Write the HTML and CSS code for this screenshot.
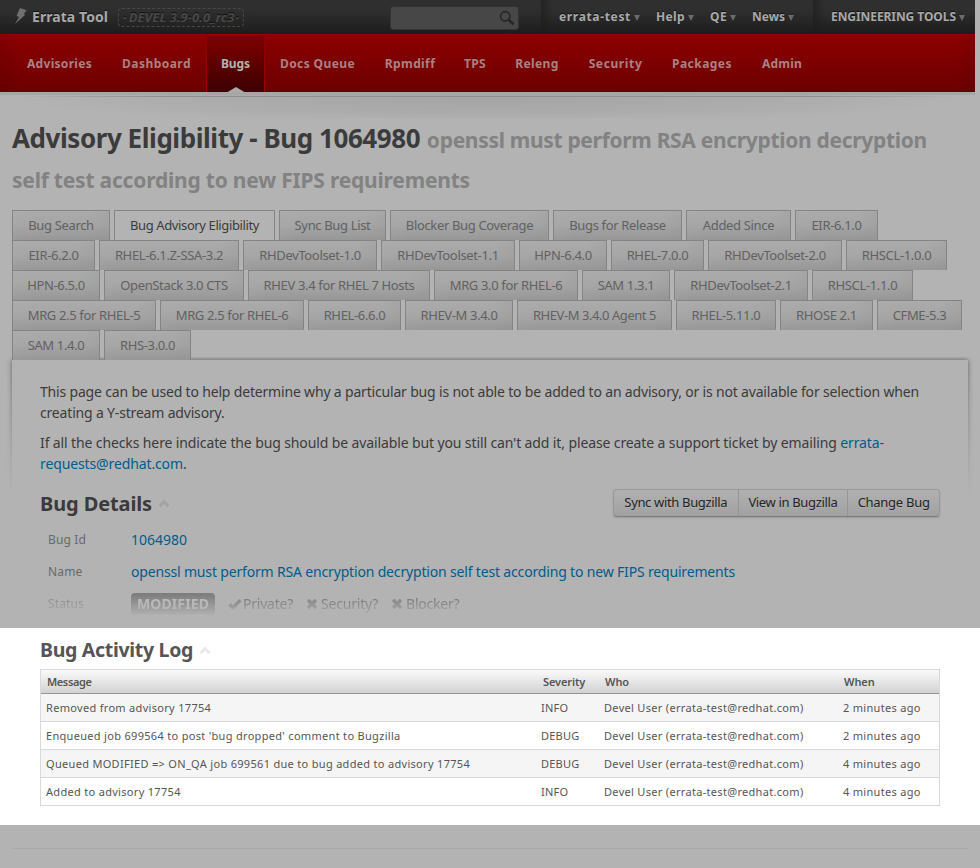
FILE: index.html
```html
<!DOCTYPE html>
<html lang="en">
<head>
<meta charset="utf-8">
<title>Advisory Eligibility - Bug 1064980</title>
<link rel="stylesheet" href="styles.css">
</head>
<body>
<header class="topbar">
  <svg class="bolt" width="12" height="17" viewBox="0 0 12 17"><path d="M5 0 11.6 2.2 8.8 6 10.2 6.7 0 16 4.1 9 1.5 8Z"/></svg>
  <span class="brand">Errata Tool</span>
  <span class="version">DEVEL 3.9-0.0_rc3</span>
  <div class="search"><svg width="16" height="16" viewBox="0 0 16 16"><circle cx="6.3" cy="6.3" r="4.7" fill="none" stroke-width="1.6"/><path d="M9.8 9.8 13.6 13.4" stroke-width="2.8" stroke-linecap="round"/></svg></div>
  <nav class="usermenu">
    <a class="m-user">errata-test<i></i></a><a class="m-help">Help<i></i></a><a class="m-qe">QE<i></i></a><a class="m-news">News<i></i></a>
  </nav>
  <nav class="tools"><a>ENGINEERING TOOLS<i></i></a></nav>
</header>
<nav class="mainnav">
  <a>Advisories</a><a>Dashboard</a><a class="active">Bugs</a><a>Docs Queue</a><a>Rpmdiff</a><a>TPS</a><a>Releng</a><a>Security</a><a>Packages</a><a>Admin</a>
</nav>
<div class="navshadow"></div>
<main>
  <h1><span class="title">Advisory Eligibility - Bug 1064980</span> <small>openssl must perform RSA encryption decryption<br><span class="second">self test according to new FIPS requirements</span></small></h1>
  <div class="tabs">
    <div class="row r1"><a>Bug Search</a><a class="on">Bug Advisory Eligibility</a><a>Sync Bug List</a><a>Blocker Bug Coverage</a><a>Bugs for Release</a><a>Added Since</a><a>EIR-6.1.0</a></div>
    <div class="row r2"><a>EIR-6.2.0</a><a>RHEL-6.1.Z-SSA-3.2</a><a>RHDevToolset-1.0</a><a>RHDevToolset-1.1</a><a>HPN-6.4.0</a><a>RHEL-7.0.0</a><a>RHDevToolset-2.0</a><a>RHSCL-1.0.0</a></div>
    <div class="row r3"><a>HPN-6.5.0</a><a>OpenStack 3.0 CTS</a><a>RHEV 3.4 for RHEL 7 Hosts</a><a>MRG 3.0 for RHEL-6</a><a>SAM 1.3.1</a><a>RHDevToolset-2.1</a><a>RHSCL-1.1.0</a></div>
    <div class="row r4"><a>MRG 2.5 for RHEL-5</a><a>MRG 2.5 for RHEL-6</a><a>RHEL-6.6.0</a><a>RHEV-M 3.4.0</a><a>RHEV-M 3.4.0 Agent 5</a><a>RHEL-5.11.0</a><a>RHOSE 2.1</a><a>CFME-5.3</a></div>
    <div class="row r5"><a>SAM 1.4.0</a><a>RHS-3.0.0</a></div>
  </div>
  <section class="panel">
    <p class="p1">This page can be used to help determine why a particular bug is not able to be added to an advisory, or is not available for selection when<br>creating a Y-stream advisory.</p>
    <p class="p2">If all the checks here indicate the bug should be available but you still can't add it, please create a support ticket by emailing <a>errata-<br>requests@redhat.com</a>.</p>
    <div class="headrow">
      <h2 class="h-details">Bug Details</h2>
      <svg class="chev" width="12" height="9" viewBox="0 0 12 9"><path d="M1.5 7.2 6 2.7 10.5 7.2"/></svg>
      <div class="btns"><a>Sync with Bugzilla</a><a>View in Bugzilla</a><a>Change Bug</a></div>
    </div>
    <dl>
      <dt>Bug Id</dt><dd><a class="num">1064980</a></dd>
      <dt>Name</dt><dd><a>openssl must perform RSA encryption decryption self test according to new FIPS requirements</a></dd>
      <dt class="status">Status</dt>
      <dd class="status flags"><b>MODIFIED</b>
        <span><svg width="14" height="12" viewBox="0 0 14 12"><path d="M1.5 6.5 5 9.8 12.3 2.2" stroke-width="3.2"/></svg>Private?</span>
        <span><svg width="12" height="12" viewBox="0 0 12 12"><path d="M2 2 10 10M10 2 2 10" stroke-width="3.2"/></svg>Security?</span>
        <span><svg width="12" height="12" viewBox="0 0 12 12"><path d="M2 2 10 10M10 2 2 10" stroke-width="3.2"/></svg>Blocker?</span>
      </dd>
    </dl>
  </section>
</main>
<section class="log">
  <div class="headrow">
    <h2 class="h-log">Bug Activity Log</h2>
    <svg class="chev" width="12" height="9" viewBox="0 0 12 9"><path d="M1.5 7.2 6 2.7 10.5 7.2"/></svg>
  </div>
  <table>
    <colgroup><col class="c1"><col class="c2"><col class="c3"><col class="c4"></colgroup>
    <thead><tr><th class="t-msg">Message</th><th>Severity</th><th>Who</th><th>When</th></tr></thead>
    <tbody>
      <tr><td>Removed from advisory 17754</td><td>INFO</td><td>Devel User (errata-test@redhat.com)</td><td>2 minutes ago</td></tr>
      <tr><td>Enqueued job 699564 to post 'bug dropped' comment to Bugzilla</td><td>DEBUG</td><td>Devel User (errata-test@redhat.com)</td><td>2 minutes ago</td></tr>
      <tr><td>Queued MODIFIED =&gt; ON_QA job 699561 due to bug added to advisory 17754</td><td>DEBUG</td><td>Devel User (errata-test@redhat.com)</td><td>4 minutes ago</td></tr>
      <tr><td>Added to advisory 17754</td><td>INFO</td><td>Devel User (errata-test@redhat.com)</td><td>4 minutes ago</td></tr>
    </tbody>
  </table>
</section>
<div class="footline"></div>
</body>
</html>
```
FILE: styles.css
```css
* { box-sizing: border-box; }
body { margin: 0; height: 868px; overflow: hidden; background: #b3b3b3; color: #3b3b3b; font-family: "Noto Sans", "Open Sans", sans-serif; font-size: 14px; white-space: nowrap; }

.topbar { display: flex; width: 975px; height: 34px; padding-left: 15px; background: linear-gradient(#2f2f2f 30%, #1c1c1c); color: #a9a9a9; font-weight: 700; line-height: 34px; text-shadow: 0 -1px 0 #111; }
.bolt { margin: 8px 5px 0 0; fill: #707070; }
.brand { width: 86px; letter-spacing: .06px; }
.version { display: block; width: 126px; height: 19px; margin-top: 8px; border: 1px dashed #484848; border-radius: 4px; color: #484848; font-size: 13px; font-style: italic; line-height: 17px; text-align: center; letter-spacing: .05px; }
.version::before, .version::after { content: "·"; }
.version::before { margin-right: 2px; }
.version::after { margin-left: 1px; }
.search { width: 129px; height: 24px; margin: 6px 0 0 146px; padding: 3px 3px 0 0; border: 1px solid #333; border-radius: 3px; background: #474747; line-height: 0; text-align: right; }
.search svg { stroke: #262626; }
.usermenu { display: flex; width: 272px; height: 34px; margin-left: 22px; padding-left: 18px; background: linear-gradient(90deg, #1b1b1b99, transparent 12px); font-size: 12px; line-height: 33px; }
.tools { padding-left: 18px; height: 34px; background: linear-gradient(90deg, #1b1b1b99, transparent 12px); font-size: 12px; line-height: 33px; letter-spacing: -.07px; }
.topbar i { display: inline-block; margin-left: 3px; border: 3px solid transparent; border-top: 6px solid #6a6a6a; border-bottom: 0; }
.m-user { width: 97px; letter-spacing: .66px; }
.m-help { width: 54px; letter-spacing: .37px; }
.m-qe { width: 42px; letter-spacing: .39px; }

.mainnav { display: flex; width: 975px; height: 58px; padding-left: 12px; background: linear-gradient(90deg, #0001, transparent 20px, transparent 955px, #0001), linear-gradient(#8c0000, #6c0000); border-top: 1px solid #a00000; border-bottom: 1px solid #580000; color: #b08080; font-size: 12px; font-weight: 700; line-height: 57px; letter-spacing: .4px; text-shadow: 0 -1px 0 #5008; }
.mainnav a { width: 95px; flex: none; text-align: center; }
.mainnav a:nth-child(1) { letter-spacing: .3px; }
.mainnav a:nth-child(2) { width: 99px; letter-spacing: .47px; }
.mainnav a:nth-child(3) { width: 59px; letter-spacing: -.05px; }
.mainnav a:nth-child(4) { width: 105px; }
.mainnav a:nth-child(5) { width: 80px; }
.mainnav a:nth-child(6) { width: 50px; }
.mainnav a:nth-child(7) { width: 74px; }
.mainnav a:nth-child(8) { width: 83px; letter-spacing: .62px; }
.mainnav a:nth-child(9) { width: 90px; letter-spacing: .47px; }
.mainnav a:nth-child(10) { width: 70px; letter-spacing: .2px; }
.mainnav .active { position: relative; height: 57px; border: solid; border-width: 0 1px; border-image: linear-gradient(#8c0000, #a00000) 1; background: linear-gradient(#800000, #3c0000); color: #b3b3b3; }
.active::after { content: ""; position: absolute; left: 19px; bottom: -1px; border: 10px solid transparent; border-top: 0; border-bottom: 6px solid #aaa; }

.navshadow { width: 975px; height: 27px; background: radial-gradient(ellipse 480px 24px at 50% 4px, #a5a5a5, #acacac 60%, #b3b3b3); position: relative; border-top: 3px solid #a6a6a6; }
.navshadow::after { content: ""; position: absolute; left: 20px; right: 20px; top: 1px; height: 1px; background: linear-gradient(90deg, transparent, #8f8d8f 15%, #8f8d8f 85%, transparent); }

h1, h2, p, dl, dd { margin: 0; }
main { height: 509px; }
h1 { height: 91px; padding-left: 12px; font-size: 26px; line-height: 38px; }
.title { letter-spacing: -.44px; }
small { color: #828282; font-size: 21px; letter-spacing: -.315px; }
.second { letter-spacing: -.21px; }

.tabs { padding-left: 12px; font-size: 13px; letter-spacing: -.35px; color: #616161; }
.row { display: flex; gap: 4px; height: 30px; }
.row a { flex: none; border: 1px solid #848484; border-bottom: 0; line-height: 28px; text-align: center; background: linear-gradient(90deg, #b3b3b322, transparent 20px, transparent calc(100% - 20px), #8882), linear-gradient(#ababab, #a5a5a5 50%, #979797); }
.row .on { background: #b3b3b3; color: #3b3b3b; letter-spacing: -.39px; }
.r1 a { width: 98px; }
.r1 a:nth-child(2) { width: 161px; }
.r1 a:nth-child(3) { width: 107px; }
.r1 a:nth-child(4) { width: 159px; }
.r1 a:nth-child(5) { width: 129px; }
.r1 a:nth-child(6) { width: 105px; }
.r1 a:nth-child(7) { width: 83px; }
.r2 a { width: 134px; }
.r2 a:nth-child(1) { width: 83px; }
.r2 a:nth-child(2) { width: 140px; }
.r2 a:nth-child(5) { width: 88px; }
.r2 a:nth-child(6) { width: 93px; }
.r2 a:nth-child(8) { width: 101px; }
.r3 a { width: 88px; }
.r3 a:nth-child(2) { width: 140px; }
.r3 a:nth-child(3) { width: 182px; }
.r3 a:nth-child(4) { width: 144px; }
.r3 a:nth-child(6) { width: 134px; }
.r3 a:nth-child(7) { width: 101px; }
.r4 a { width: 144px; }
.r4 a:nth-child(3) { width: 93px; }
.r4 a:nth-child(4) { width: 108px; }
.r4 a:nth-child(5) { width: 155px; letter-spacing: -.44px; }
.r4 a:nth-child(6) { width: 100px; }
.r4 a:nth-child(7) { width: 93px; }
.r4 a:nth-child(8) { width: 85px; }
.r5 a { width: 88px; }
.r5 a:nth-child(2) { width: 87px; }

.panel { position: relative; margin: 0 12px; height: 268px; padding: 21px 28px 0; background: #b3b3b3; }
.panel::before { content: ""; position: absolute; z-index: -1; inset: 0; box-shadow: 0 0 5px #555; clip-path: inset(-3px -6px 0 -6px); mask: linear-gradient(#000, transparent) -6px -6px / calc(100% + 12px) 140px no-repeat; mask-clip: no-clip; }
.panel p { line-height: 21px; margin-bottom: 9px; }
.p1 { letter-spacing: -.178px; }
.p2 { letter-spacing: -.119px; }
.panel a { color: #005c8e; }
.headrow { display: flex; align-items: center; }
.panel .headrow { margin-top: 15px; height: 28px; }
h2 { font-size: 20px; line-height: 28px; }
.h-details { width: 112px; padding-top: 1px; letter-spacing: -.125px; }
.h-log { width: 153px; font-size: 19.5px; letter-spacing: -.3px; }
.chev { margin-left: 6px; fill: none; stroke: #a3a3a3; stroke-width: 3; }
.log .chev { stroke: #e9e9e9; }
.btns { display: flex; margin-left: auto; width: 327px; height: 28px; border: 1px solid #989898; border-bottom-color: #7c7c7c; border-radius: 4px; background: linear-gradient(#b1b1b1, #a1a1a1); box-shadow: 0 1px 2px #0002; font-size: 13px; letter-spacing: -.34px; line-height: 25px; text-align: center; }
.btns a { color: #242424; width: 124px; text-shadow: 0 1px 1px #b3b3b3; }
.btns a + a { width: 110px; border-left: 1px solid #959595; }
.btns a + a + a { width: 92px; letter-spacing: -.28px; }

dl { display: grid; grid-template-columns: 83px 1fr; grid-auto-rows: 32px; padding: 7px 0 0 8px; line-height: 32px; letter-spacing: -.168px; }
dt { color: #696969; font-size: 12px; letter-spacing: .15px; line-height: 31px; }
.num { letter-spacing: 0; }
.status { mask: linear-gradient(#0009 20%, #0001 80%, transparent 85%); }
.flags { display: flex; align-items: center; gap: 13px; letter-spacing: -.22px; }
.flags b { width: 84px; height: 22px; border-radius: 4px; background: #5a5a5a; color: #c4c4c4; line-height: 22px; text-align: center; letter-spacing: .1px; }
.flags span { display: flex; align-items: center; }
.flags svg { margin-right: 1px; fill: none; stroke: #555; }
.flags span + span svg { margin-right: 3px; }

.log { height: 197px; padding: 8px 40px 0; background: #fff; color: #555; }
table { width: 900px; margin-top: 5px; table-layout: fixed; border-collapse: separate; border-spacing: 0; border: 1px solid #d9d9d9; border-bottom: 0; font-size: 11px; letter-spacing: .31px; }
.c1 { width: 496px; }
.c2 { width: 62px; }
.c3 { width: 239px; }
th { height: 24px; padding: 0 6px; text-align: left; font-weight: 600; line-height: 22px; letter-spacing: -.1px; background: linear-gradient(#fafafa, #d2d2d2); border-bottom: 1px solid #959595; }
.t-msg { letter-spacing: -.4px; }
td { height: 28px; padding: 0 5px; line-height: 27px; border-bottom: 1px solid #d9d9d9; }
td:nth-child(2) { letter-spacing: .2px; padding-left: 4px; }
tbody tr:nth-child(odd) { background: #f5f5f5; }
.footline { height: 1px; margin: 23px 12px 0; background: #aaa; }
```
